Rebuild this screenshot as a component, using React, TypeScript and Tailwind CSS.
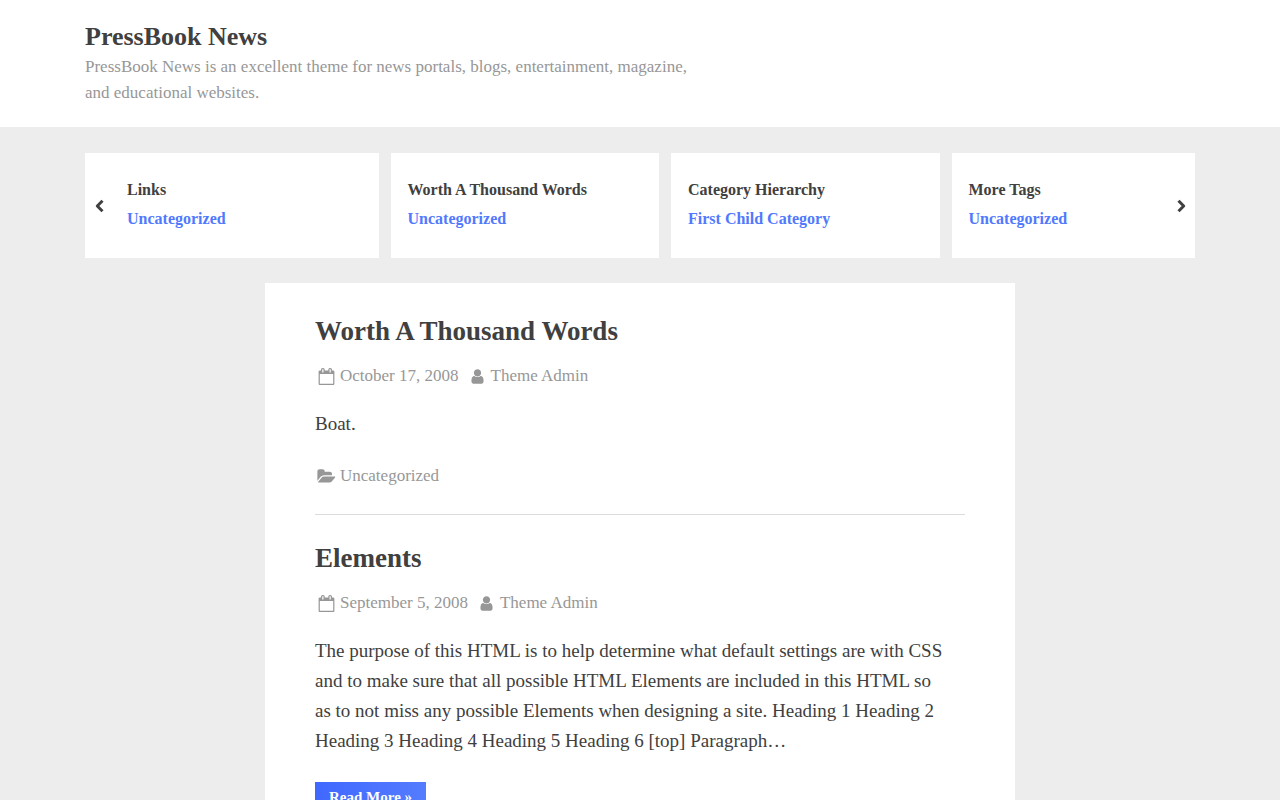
const slides = [
  { title: "Links", category: "Uncategorized" },
  { title: "Worth A Thousand Words", category: "Uncategorized" },
  { title: "Category Hierarchy", category: "First Child Category" },
  { title: "More Tags", category: "Uncategorized" },
];

const posts = [
  {
    title: "Worth A Thousand Words",
    date: "October 17, 2008",
    author: "Theme Admin",
    excerpt: "Boat.",
    category: "Uncategorized",
    readMore: false,
  },
  {
    title: "Elements",
    date: "September 5, 2008",
    author: "Theme Admin",
    excerpt:
      "The purpose of this HTML is to help determine what default settings are with CSS and to make sure that all possible HTML Elements are included in this HTML so as to not miss any possible Elements when designing a site. Heading 1 Heading 2 Heading 3 Heading 4 Heading 5 Heading 6 [top] Paragraph…",
    category: "",
    readMore: true,
  },
];

const iconPaths = {
  calendar:
    "M192 1664h1408v-1024h-1408v1024zM576 448v-288q0-14-9-23t-23-9h-64q-14 0-23 9t-9 23v288q0 14 9 23t23 9h64q14 0 23-9t9-23zM1344 448v-288q0-14-9-23t-23-9h-64q-14 0-23 9t-9 23v288q0 14 9 23t23 9h64q14 0 23-9t9-23zM1728 384v1280q0 52-38 90t-90 38h-1408q-52 0-90-38t-38-90v-1280q0-52 38-90t90-38h128v-96q0-66 47-113t113-47h64q66 0 113 47t47 113v96h384v-96q0-66 47-113t113-47h64q66 0 113 47t47 113v96h128q52 0 90 38t38 90z",
  user: "M1536 1399q0 109-62.5 187t-150.5 78h-854q-88 0-150.5-78t-62.5-187q0-85 8.5-160.5t31.5-152 58.5-131 94-89 134.5-34.5q131 128 313 128t313-128q76 0 134.5 34.5t94 89 58.5 131 31.5 152 8.5 160.5zm-256-887q0 159-112.5 271.5t-271.5 112.5-271.5-112.5-112.5-271.5 112.5-271.5 271.5-112.5 271.5 112.5 112.5 271.5z",
  folder:
    "M1815 952q0 31-31 66l-336 396q-43 51-120.5 86.5t-143.5 35.5h-1088q-34 0-60.5-13t-26.5-43q0-31 31-66l336-396q43-51 120.5-86.5t143.5-35.5h1088q34 0 60.5 13t26.5 43zm-343-344v160h-832q-94 0-197 47.5t-164 119.5l-337 396-5 6q0-4-.5-12.5t-.5-12.5v-960q0-92 66-158t158-66h320q92 0 158 66t66 158v32h544q92 0 158 66t66 158z",
};

function MetaIcon({ name }: { name: keyof typeof iconPaths }) {
  return (
    <svg
      viewBox="0 0 1792 1792"
      className="size-[17px] shrink-0 overflow-visible fill-current"
      aria-hidden="true"
    >
      <path d={iconPaths[name]} />
    </svg>
  );
}

function Chevron({ points }: { points: string }) {
  return (
    <svg
      viewBox="0 0 14 14"
      className="size-[14px] fill-none stroke-current"
      strokeWidth="3"
      strokeLinejoin="round"
      aria-hidden="true"
    >
      <polyline points={points} />
    </svg>
  );
}

function Header() {
  return (
    <header className="bg-white">
      <div className="mx-auto max-w-[1140px] px-[15px] pt-5 pb-[21px]">
        <p className="text-[26px] leading-[34px] font-bold">
          <a href="#">PressBook News</a>
        </p>
        <p className="max-w-[608px] text-[17px] leading-[26px] text-[#979797]">
          PressBook News is an excellent theme for news portals, blogs,
          entertainment, magazine, and educational websites.
        </p>
      </div>
    </header>
  );
}

function Carousel() {
  return (
    <section
      aria-label="Posts carousel"
      className="mx-auto max-w-[1140px] px-[15px] pt-[26px] pb-[25px]"
    >
      <div className="flex">
        <button
          type="button"
          aria-label="Previous"
          className="flex w-[25px] shrink-0 items-center justify-center bg-white pl-1"
        >
          <Chevron points="9.5,1.8 4.3,7 9.5,12.2" />
        </button>
        {slides.map((slide) => (
          <article
            key={slide.title}
            className="mr-3 min-w-0 basis-[calc((100%-36px)/4)] shrink-0 bg-white px-[17px] pt-[22px] pb-[25px] text-[16px] leading-[29px] font-bold last-of-type:mr-0 last-of-type:shrink last-of-type:grow"
          >
            <h2>
              <a href="#">{slide.title}</a>
            </h2>
            <a href="#" className="text-[#5179fd]">
              {slide.category}
            </a>
          </article>
        ))}
        <button
          type="button"
          aria-label="Next"
          className="flex w-[25px] shrink-0 items-center justify-center bg-white pr-1"
        >
          <Chevron points="4.5,1.8 9.7,7 4.5,12.2" />
        </button>
      </div>
    </section>
  );
}

export default function App() {
  return (
    <div className="min-h-screen bg-[#ededed] font-['Liberation_Serif',serif] text-[#404040]">
      <Header />
      <Carousel />
      <main className="mx-auto max-w-[750px] bg-white px-[50px] pt-[30px] pb-[50px]">
        {posts.map((post) => (
          <article
            key={post.title}
            className="mb-[25px] border-b border-[#dcdcdc] pb-[25px] last:mb-0 last:border-b-0"
          >
            <h2 className="text-[27px] leading-[36px] font-bold">
              <a href="#">{post.title}</a>
            </h2>
            <div className="mt-[14px] flex gap-[10px] text-[17px] leading-[26px] text-[#979797]">
              <a href="#" className="flex items-center gap-[5px] pl-[3px]">
                <MetaIcon name="calendar" />
                <time>{post.date}</time>
              </a>
              <a href="#" className="flex items-center gap-[5px]">
                <MetaIcon name="user" />
                {post.author}
              </a>
            </div>
            <p className="mt-5 pr-4 text-[19px] leading-[30px]">
              {post.excerpt}
            </p>
            {post.category && (
              <div className="mt-6 flex text-[17px] leading-[26px] text-[#979797]">
                <a href="#" className="flex items-center gap-[5px] pl-[3px]">
                  <MetaIcon name="folder" />
                  {post.category}
                </a>
              </div>
            )}
            {post.readMore && (
              <a
                href="#"
                className="mt-[26px] inline-block bg-linear-to-r from-[#4068ff] to-[#547cff] px-[14px] py-[3px] text-[15px] leading-6 font-bold text-white"
              >
                Read More »
              </a>
            )}
          </article>
        ))}
      </main>
    </div>
  );
}
